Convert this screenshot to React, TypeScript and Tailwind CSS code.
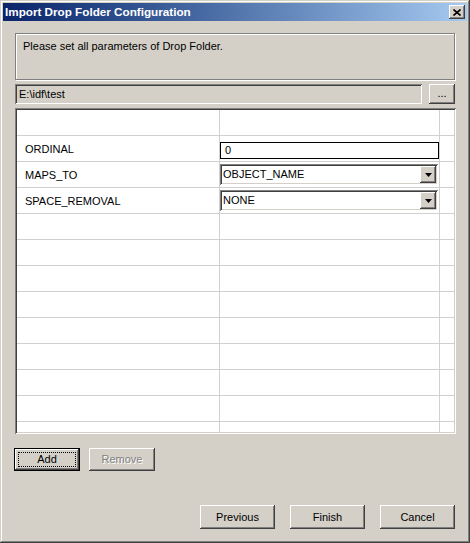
const raised =
  "bg-[#d4d0c8] shadow-[inset_-1px_-1px_#404040,inset_1px_1px_#ffffff,inset_-2px_-2px_#808080,inset_2px_2px_#d4d0c8]";
const sunken =
  "shadow-[inset_1px_1px_#808080,inset_-1px_-1px_#ffffff,inset_2px_2px_#404040,inset_-2px_-2px_#d4d0c8]";

function Btn({ label, className = "" }: { label: string; className?: string }) {
  return (
    <div className={`${raised} flex items-center justify-center text-[11px] text-black ${className}`}>
      {label}
    </div>
  );
}

function Combo({ value }: { value: string }) {
  return (
    <div className={`relative w-[218px] h-[21px] bg-white ${sunken} flex items-center`}>
      <span className="pl-[3px] text-[11px] text-black">{value}</span>
      <div className={`absolute right-[2px] top-[2px] w-[16px] h-[17px] ${raised} flex items-center justify-center`}>
        <svg width="7" height="4" viewBox="0 0 7 4">
          <path d="M0 0h7L3.5 4z" fill="#000" />
        </svg>
      </div>
    </div>
  );
}

const rows = [
  { name: "", kind: "none" },
  { name: "ORDINAL", kind: "input", value: "0" },
  { name: "MAPS_TO", kind: "combo", value: "OBJECT_NAME" },
  { name: "SPACE_REMOVAL", kind: "combo", value: "NONE" },
  ...Array.from({ length: 9 }, () => ({ name: "", kind: "none" })),
];

export default function App() {
  return (
    <div className="w-[470px] h-[543px] overflow-hidden font-['Liberation_Sans',Arial,sans-serif]">
      <div className="w-full h-full p-[3px] bg-[#d4d0c8] shadow-[inset_-1px_-1px_#404040,inset_1px_1px_#d4d0c8,inset_-2px_-2px_#808080,inset_2px_2px_#ffffff] flex flex-col">
        {/* title bar */}
        <div className="h-[18px] flex items-center justify-between pl-[2px] pr-[2px] bg-gradient-to-r from-[#0a246a] to-[#a6caf0]">
          <span className="text-white font-bold text-[11.7px] leading-none">Import Drop Folder Configuration</span>
          <div className={`w-[16px] h-[14px] ${raised} flex items-center justify-center`}>
            <svg width="8" height="7" viewBox="0 0 8 7">
              <path d="M0.5 0.5L7.5 6.5M7.5 0.5L0.5 6.5" stroke="#000" strokeWidth="1.6" />
            </svg>
          </div>
        </div>

        <div className="flex-1 flex flex-col px-[12px] pt-[12px]">
          {/* info panel */}
          <div className="h-[47px] border border-[#808080] shadow-[inset_1px_1px_#ffffff,1px_1px_#ffffff] px-[7px] pt-[5px]">
            <p className="text-[11px] leading-[14px] text-black">Please set all parameters of Drop Folder.</p>
          </div>

          {/* path */}
          <div className="mt-[4px] flex gap-[7px]">
            <div className={`flex-1 h-[20px] ${sunken} flex items-center pl-[4px]`}>
              <span className="text-[11px] text-black">E:\idf\test</span>
            </div>
            <Btn label="..." className="w-[26px] h-[20px] pb-[2px]" />
          </div>

          {/* grid */}
          <div className={`mt-[4px] h-[326px] w-[441px] p-[2px] bg-white ${sunken}`}>
            <div className="h-full overflow-hidden">
              {rows.map((r, i) => (
                <div key={i} className="h-[26px] flex border-b border-[#d0d0d0]">
                  <div className="w-[203px] border-r border-[#d0d0d0] flex items-center pl-[8px] pt-[1px] text-[11px] text-black">
                    {r.name}
                  </div>
                  <div className="w-[220px] border-r border-[#d0d0d0] flex items-center">
                    {r.kind === "input" && (
                      <div className="w-[219px] h-[17px] mt-[4px] border border-black bg-white flex items-center pl-[4px] text-[11px] text-black">
                        {r.value}
                      </div>
                    )}
                    {r.kind === "combo" && <Combo value={r.value ?? ""} />}
                  </div>
                  <div className="flex-1" />
                </div>
              ))}
            </div>
          </div>

          {/* add / remove */}
          <div className="mt-[14px] -ml-[1px] flex gap-[9px]">
            <div className="w-[66px] h-[23px] border border-black">
              <div className={`${raised} w-full h-full p-[3px]`}>
                <div className="w-full h-full border border-dotted border-black flex items-center justify-center text-[11px] text-black">
                  Add
                </div>
              </div>
            </div>
            <div className={`${raised} w-[66px] h-[23px] flex items-center justify-center text-[11px] text-[#808080] [text-shadow:1px_1px_#ffffff]`}>
              Remove
            </div>
          </div>

          {/* footer */}
          <div className="mt-[34px] flex justify-end gap-[15px]">
            <Btn label="Previous" className="w-[75px] h-[24px]" />
            <Btn label="Finish" className="w-[75px] h-[24px]" />
            <Btn label="Cancel" className="w-[75px] h-[24px]" />
          </div>
        </div>
      </div>
    </div>
  );
}
